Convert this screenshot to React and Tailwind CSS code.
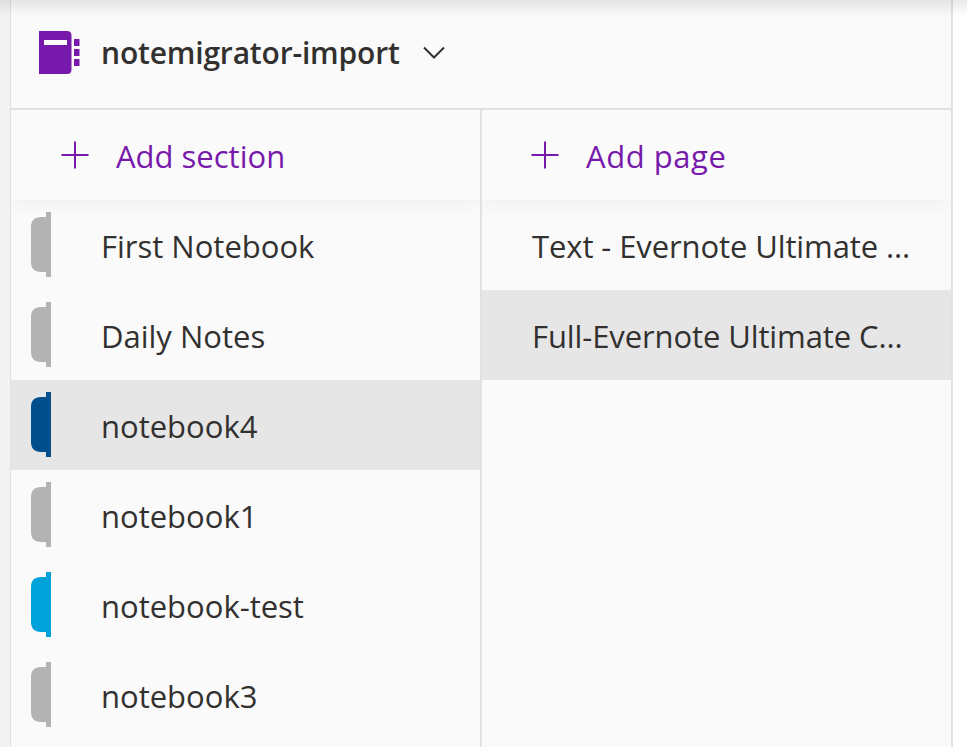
import React from "react";

function Tab({ color }) {
  return (
    <svg width="20" height="65" viewBox="0 0 20 65" className={color + " mb-px shrink-0"} fill="currentColor">
      <path d="M15 0H20V65H15V60H10C3.500 60 0 56.500 0 50V15C0 8.500 3.500 5 10 5H15Z" />
    </svg>
  );
}

function Plus() {
  return (
    <svg width="28" height="28" viewBox="0 0 28 28" className="shrink-0 text-[#7719aa]" fill="currentColor">
      <rect x="0.5" y="13" width="27" height="2" />
      <rect x="13" y="0.5" width="2" height="27" />
    </svg>
  );
}

function AddRow({ label, pad, track }) {
  return (
    <div className={"relative z-10 flex h-[90px] items-center gap-[27px] bg-[#fafafa] text-[31px] text-[#7719aa] shadow-[0_6px_14px_rgba(0,0,0,0.035)] " + pad}>
      <Plus />
      <span className={"pt-[2px] " + track}>{label}</span>
    </div>
  );
}

const sections = [
  ["First Notebook", "text-[#b3b3b3]"],
  ["Daily Notes", "text-[#b3b3b3]"],
  ["notebook4", "text-[#004e8c]", true],
  ["notebook1", "text-[#b3b3b3]"],
  ["notebook-test", "text-[#00a2db]"],
  ["notebook3", "text-[#b3b3b3]"],
];

const pages = [["Text - Evernote Ultimate ..."], ["Full-Evernote Ultimate C...", true]];

export default function App() {
  return (
    <div className="relative h-[747px] w-[967px] overflow-hidden bg-white font-['Open_Sans','Noto_Sans',sans-serif] text-[#323130]">
      <div className="flex h-full">
        <div className="w-[10px] shrink-0 bg-[#f3f3f3]" />
        <div className="flex w-[943px] shrink-0 flex-col border-r-2 border-l-[1px] border-[#e1e1e1] bg-[#fafafa]">
          <div className="flex h-[110px] shrink-0 items-center border-b-2 border-[#e1e1e1] pb-[3px] pl-[27px]">
            <svg width="42" height="44" viewBox="0 0 42 44" className="shrink-0 text-[#7719aa]" fill="currentColor">
              <path fillRule="evenodd" d="M1 0H29C32 0 33.500 1.500 33.500 4.500V38.500C33.500 41.500 32 43 29 43H1ZM6 9V14H29V9Z" />
              <rect x="36" y="8" width="5.500" height="7" />
              <rect x="36" y="18" width="5.500" height="7" />
              <rect x="36" y="28" width="5.500" height="7" />
            </svg>
            <span className="ml-[21px] text-[30px] font-semibold tracking-[-0.18px]">notemigrator-import</span>
            <svg width="22" height="14" viewBox="0 0 22 14" className="ml-[23px] shrink-0 text-[#323130]" fill="none" stroke="currentColor" strokeWidth="2">
              <path d="M1 1.500L11 11.500L21 1.500" />
            </svg>
          </div>
          <div className="flex min-h-0 flex-1">
            <div className="w-[469px] shrink-0 overflow-hidden">
              <AddRow label="Add section" pad="pl-[50px]" track="" />
              {sections.map(([name, color, active]) => (
                <div key={name} className={"flex h-[90px] items-center pl-5 text-[31px] " + (active ? "bg-[#e6e6e6]" : "")}>
                  <Tab color={color} />
                  <span className="ml-[50px] pt-[2px]">{name}</span>
                </div>
              ))}
            </div>
            <div className="flex-1 overflow-hidden border-l-2 border-[#e1e1e1]">
              <AddRow label="Add page" pad="pl-[49px]" track="tracking-[0.55px]" />
              {pages.map(([name, active]) => (
                <div key={name} className={"flex h-[90px] items-center whitespace-nowrap pl-[50px] text-[31px] tracking-[-0.1px] " + (active ? "bg-[#e6e6e6]" : "")}>
                  <span className="pt-[2px]">{name}</span>
                </div>
              ))}
            </div>
          </div>
        </div>
        <div className="flex-1 bg-white" />
      </div>
      <div className="absolute inset-x-0 top-0 h-[16px] bg-gradient-to-b from-[rgba(0,0,0,0.09)] to-transparent" />
    </div>
  );
}
